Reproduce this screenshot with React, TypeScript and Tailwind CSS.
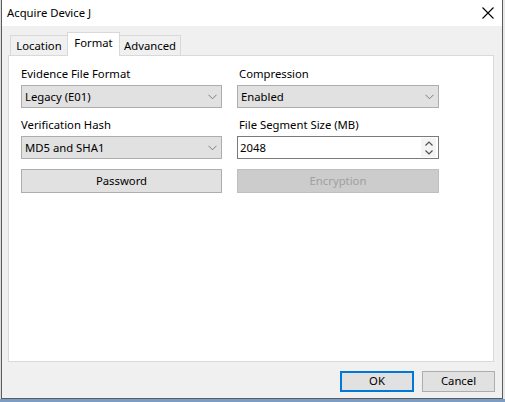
import React from "react";

const font = { fontFamily: '"Noto Sans", "Segoe UI", Arial, sans-serif' };

function Chevron() {
  return (
    <svg width="9" height="6" viewBox="0 0 9 6" className="shrink-0">
      <path d="M0.5 0.8 L4.5 4.8 L8.5 0.8" fill="none" stroke="#707070" strokeWidth="0.9" />
    </svg>
  );
}

function Select({ value }: { value: string }) {
  return (
    <div className="flex items-center h-[23px] w-full border border-[#adadad] bg-[#e1e1e1] pl-[3px] pr-[4px] text-[11.3px] text-black">
      <span className="flex-1 leading-none">{value}</span>
      <Chevron />
    </div>
  );
}

function Label({ children, indent }: { children: React.ReactNode; indent?: boolean }) {
  return (
    <div className={indent ? "h-[16px] leading-[16px] text-[11.3px] text-black whitespace-nowrap pl-[2px]" : "h-[16px] leading-[16px] text-[11.3px] text-black whitespace-nowrap"}>
      {children}
    </div>
  );
}

export default function App() {
  return (
    <div className="w-[505px] h-[402px] overflow-hidden flex flex-col bg-[#e6e6e6]" style={font}>
      <div className="flex h-[399px]">
        <div className="w-[1px] bg-[#dcdcdc]" />
        <div className="w-[502px] h-[399px] flex flex-col border-x border-b border-[#5c5c5c] bg-[#f0f0f0]">
          {/* Title bar */}
          <div className="h-[26px] bg-white flex items-center pl-[5px] pr-[8px]">
            <span className="flex-1 text-[11.3px] text-black leading-none">Acquire Device J</span>
            <svg width="12" height="12" viewBox="0 0 12 12">
              <path d="M0.5 0.5 L11.5 11.5 M11.5 0.5 L0.5 11.5" stroke="#000" strokeWidth="1.1" fill="none" />
            </svg>
          </div>

          {/* Body */}
          <div className="flex-1 flex flex-col pl-[6px] pr-[7px] pt-[7px]">
            {/* Tabs */}
            <div className="flex items-end h-[23px] pl-[2px] text-[11.3px] text-black">
              <div className="h-[21px] w-[57px] border-l border-t border-[#d9d9d9] bg-[#f0f0f0] flex items-center justify-center pt-[1px]">
                Location
              </div>
              <div className="relative z-10 h-[24px] w-[53px] border-x border-t border-[#d9d9d9] bg-white flex items-center justify-center pb-[2px]">
                Format
              </div>
              <div className="h-[21px] w-[61px] border-r border-t border-[#d9d9d9] bg-[#f0f0f0] flex items-center justify-center pt-[1px]">
                Advanced
              </div>
            </div>

            {/* Panel */}
            <div className="-mt-[1px] w-[486px] h-[307px] border border-[#d9d9d9] bg-white pl-[12px] pt-[10px]">
              <div className="grid grid-cols-[201px_202px] gap-x-[15px]">
                <div className="flex flex-col">
                  <Label>Evidence File Format</Label>
                  <div className="mt-[3px]"><Select value="Legacy (E01)" /></div>
                  <div className="mt-[9px]"><Label>Verification Hash</Label></div>
                  <div className="mt-[3px]"><Select value="MD5 and SHA1" /></div>
                  <div className="mt-[10px] h-[24px] border border-[#adadad] bg-[#e1e1e1] flex items-center justify-center text-[11.3px] text-black">
                    Password
                  </div>
                </div>
                <div className="flex flex-col">
                  <Label indent>Compression</Label>
                  <div className="mt-[3px]"><Select value="Enabled" /></div>
                  <div className="mt-[9px]"><Label indent>File Segment Size (MB)</Label></div>
                  <div className="mt-[3px] h-[23px] border border-[#7a7a7a] bg-white flex items-center pl-[2px] text-[11.3px] text-black">
                    <span className="flex-1 leading-none">2048</span>
                    <div className="w-[15px] h-[19px] mr-[2px] bg-[#f4f4f4] flex flex-col items-center justify-center gap-[4px]">
                      <svg width="8" height="5" viewBox="0 0 8 5">
                        <path d="M0.5 4.5 L4 1 L7.5 4.5" fill="none" stroke="#505050" strokeWidth="1.2" />
                      </svg>
                      <svg width="8" height="5" viewBox="0 0 8 5">
                        <path d="M0.5 0.5 L4 4 L7.5 0.5" fill="none" stroke="#505050" strokeWidth="1.2" />
                      </svg>
                    </div>
                  </div>
                  <div className="mt-[10px] h-[24px] border border-[#bfbfbf] bg-[#cccccc] flex items-center justify-center text-[11.3px] text-[#a0a0a0]">
                    Encryption
                  </div>
                </div>
              </div>
            </div>

            {/* Buttons */}
            <div className="flex justify-end gap-[8px] mt-[9px] text-[11.3px] text-black">
              <div className="w-[74px] h-[21px] border-2 border-[#0078d7] bg-[#e1e1e1] flex items-center justify-center">
                OK
              </div>
              <div className="w-[73px] h-[21px] border border-[#adadad] bg-[#e1e1e1] flex items-center justify-center">
                Cancel
              </div>
            </div>
          </div>
        </div>
        <div className="flex-1 bg-[#e8e8e8]" />
      </div>
      <div className="flex-1 bg-[#7d9cc4]" />
    </div>
  );
}
